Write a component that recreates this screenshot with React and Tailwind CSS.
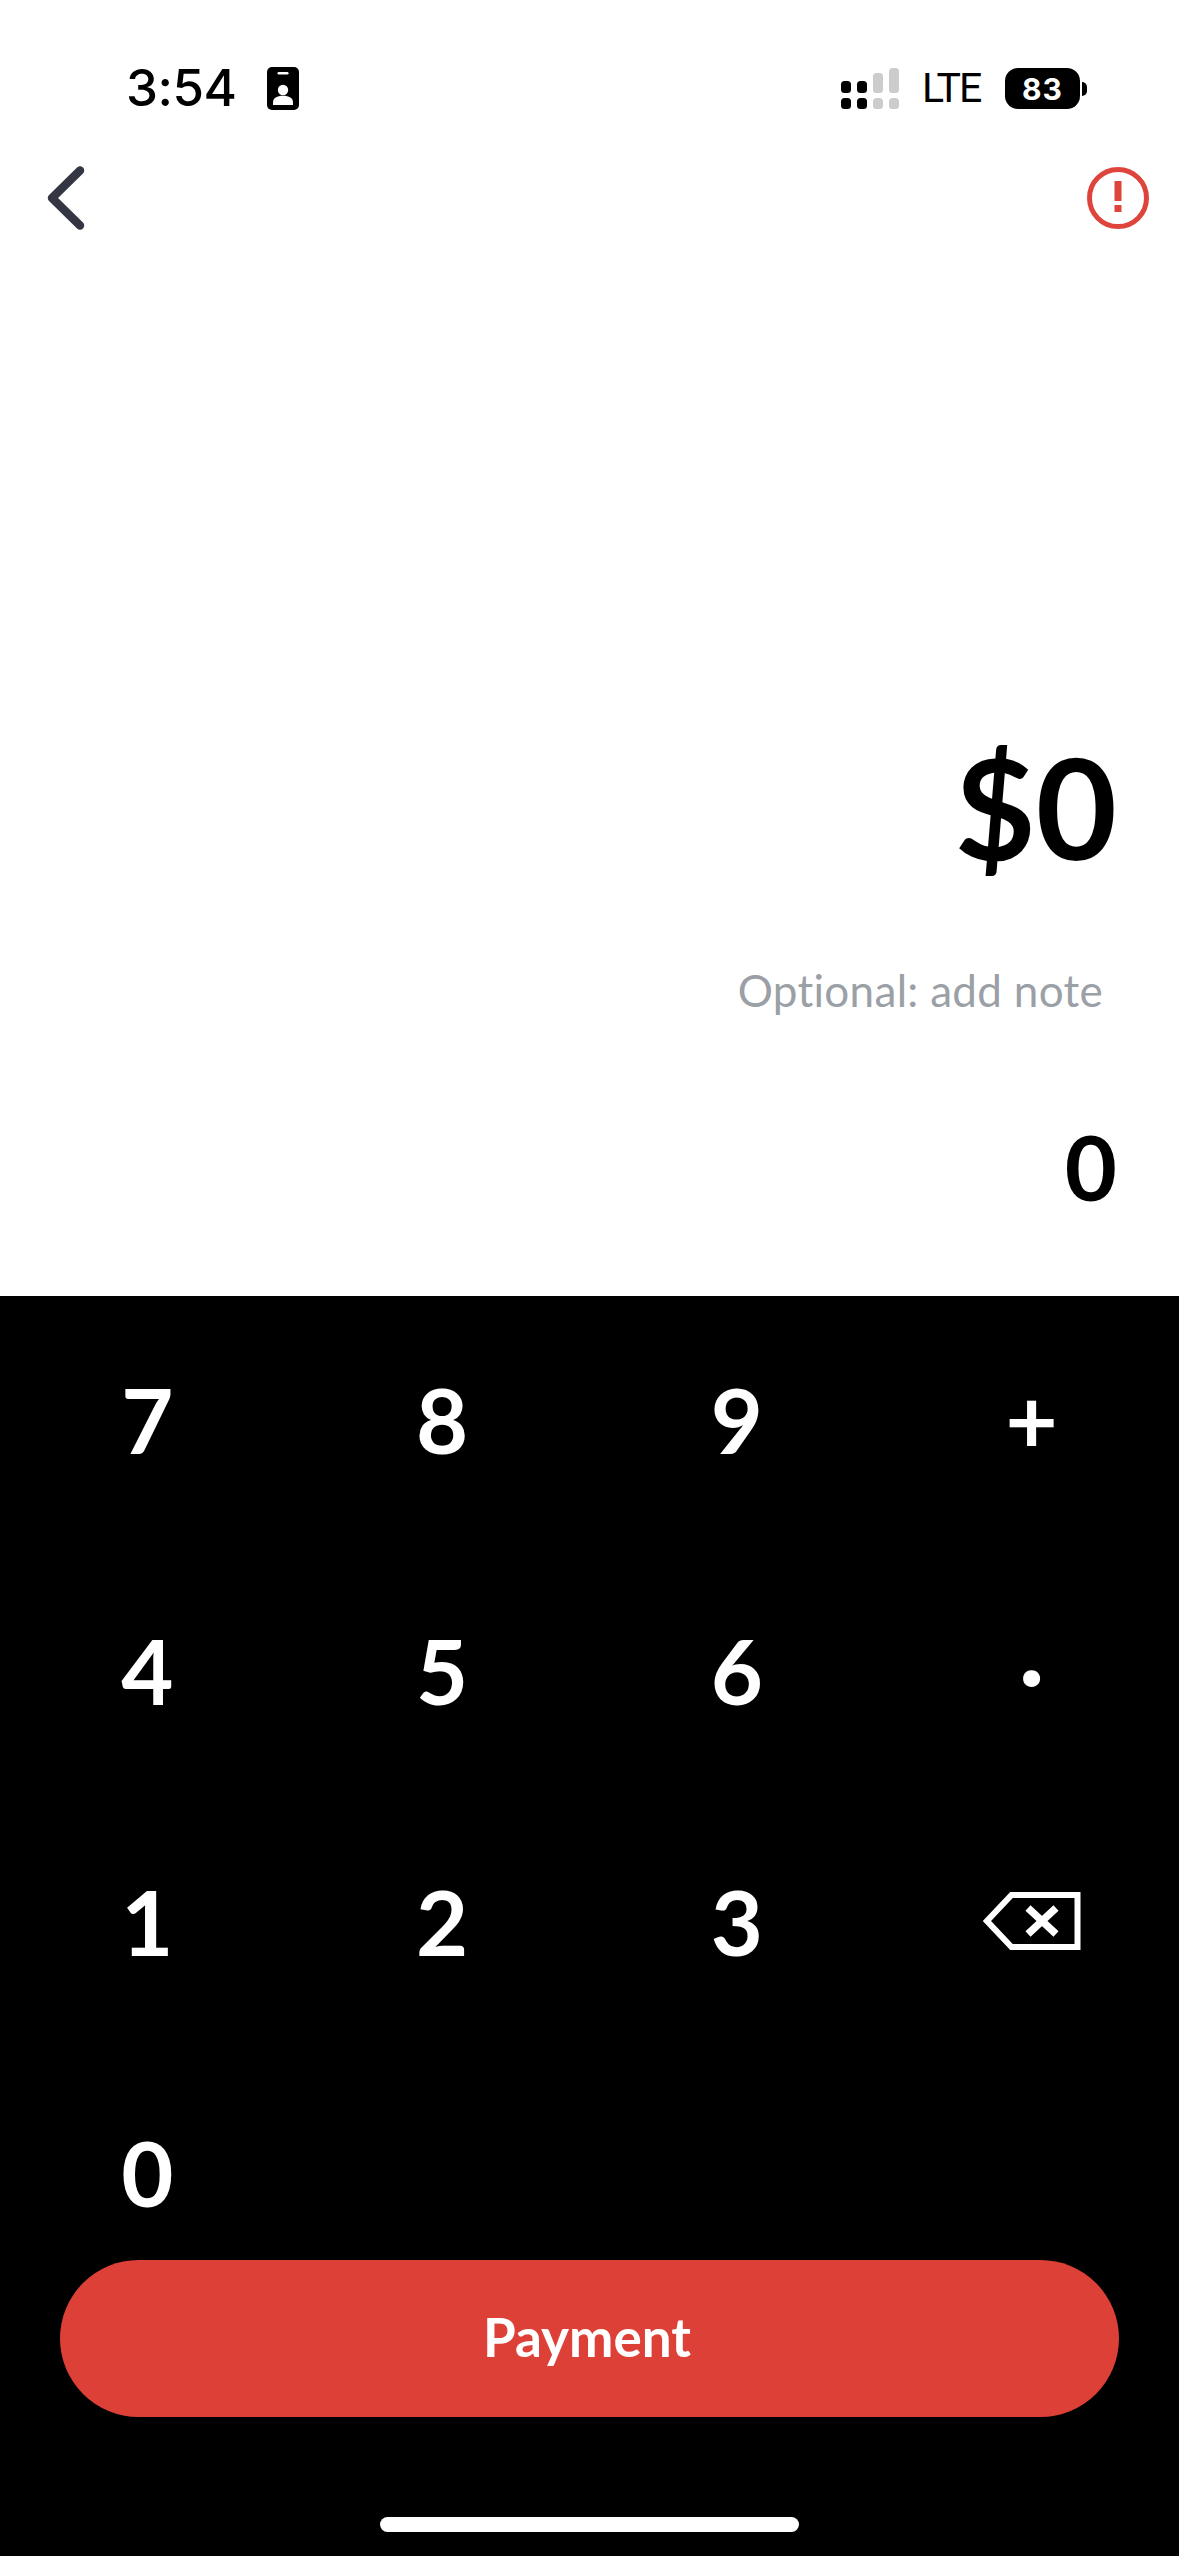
const keys = ["7", "8", "9", "+", "4", "5", "6", "·", "1", "2", "3", "back", "0"];

function Badge() {
  return (
    <svg width="32" height="43" viewBox="0 0 32 43">
      <rect width="32" height="43" rx="5" fill="#000" />
      <rect x="10.5" y="5" width="11" height="2.5" rx="1.2" fill="#fff" />
      <circle cx="16" cy="23" r="5.2" fill="#fff" />
      <path d="M6 38v-2.5C6 31 10 28.8 16 28.8s10 2.2 10 6.7V38z" fill="#fff" />
    </svg>
  );
}

function Signal() {
  const bars = [
    ["#000", 13, 12],
    ["#000", 13, 12],
    ["#ccc", 5, 20],
    ["#ccc", 0, 25],
  ];
  return (
    <svg width="58" height="41" viewBox="0 0 58 41">
      {bars.map(([c, y, h], i) => (
        <g key={i} fill={c}>
          <rect x={i * 16} y={y} width="10" height={h} rx="3.5" />
          <rect x={i * 16} y="30" width="10" height="11" rx="3.5" />
        </g>
      ))}
    </svg>
  );
}

function Backspace() {
  return (
    <svg width="98" height="58" viewBox="0 0 98 58" fill="none" stroke="#fff">
      <path d="M94.5 3H28.5L4 29l24.5 26h66z" strokeWidth="6" />
      <path d="M45 16l28 26M73 16L45 42" strokeWidth="7.5" />
    </svg>
  );
}

export default function App() {
  return (
    <div className="w-[1179px] h-[2556px] flex flex-col bg-white overflow-hidden font-['Lato',sans-serif]">
      <div className="h-[1296px] flex flex-col shrink-0">
        <div className="mt-[67px] h-[43px] flex justify-between pl-[126px] pr-[92px]">
          <div className="flex items-center gap-[31px]">
            <span className="font-['Inter',sans-serif] font-medium text-[51px] leading-none text-black tracking-[-0.5px] -translate-y-[1px]">3:54</span>
            <Badge />
          </div>
          <div className="flex items-center">
            <Signal />
            <span className="ml-[23px] w-[83px] font-['Roboto',sans-serif] font-normal text-[41px] leading-none text-black tracking-[-2px]">LTE</span>
            <div className="w-[75px] h-[41px] rounded-[13px] bg-black flex items-center justify-center font-['Inter',sans-serif] font-bold text-[30px] leading-none text-white tracking-[1px]">83</div>
            <div className="ml-[2px] w-[5px] h-[14px] rounded-r-full bg-black" />
          </div>
        </div>

        <div className="mt-[55px] flex items-center justify-between pl-[47px] pr-[30px]">
          <svg width="38" height="66" viewBox="0 0 38 66" fill="none" stroke="#343743" strokeWidth="8.5" strokeLinecap="round" strokeLinejoin="round">
            <path d="M33 5.5L5 33l28 27.5" />
          </svg>
          <svg width="62" height="62" viewBox="0 0 62 62">
            <circle cx="31" cy="31" r="28.5" fill="none" stroke="#df443c" strokeWidth="5" />
            <rect x="27.5" y="14" width="7" height="20" fill="#df443c" />
            <rect x="27.5" y="38" width="7" height="7" fill="#df443c" />
          </svg>
        </div>

        <div className="mt-[505px] pr-[62px] text-right font-bold text-[140px] leading-[140px] text-black">$0</div>
        <div className="mt-[89px] pr-[76px] text-right text-[44px] leading-[50px] tracking-[0.3px] text-[#9aa0a5]">Optional: add note</div>
        <div className="mt-[106px] pr-[62px] text-right font-bold text-[90px] leading-[90px] text-black">0</div>
      </div>

      <div className="flex-1 bg-black flex flex-col">
        <div className="grid grid-cols-4 gap-y-[81px] pt-[38px]">
          {keys.map((k) => (
            <div key={k} className="h-[170px] flex items-center justify-center font-bold text-[90px] leading-none text-white">
              {k === "back" ? <Backspace /> : k}
            </div>
          ))}
        </div>
        <div className="mt-[3px] mx-[60px] h-[157px] rounded-full bg-[#dd4037] flex items-center justify-center pb-[5px] pr-[5px] font-bold text-[53px] leading-none text-white">
          Payment
        </div>
        <div className="mt-[100px] mx-auto w-[419px] h-[15px] rounded-full bg-white" />
      </div>
    </div>
  );
}
